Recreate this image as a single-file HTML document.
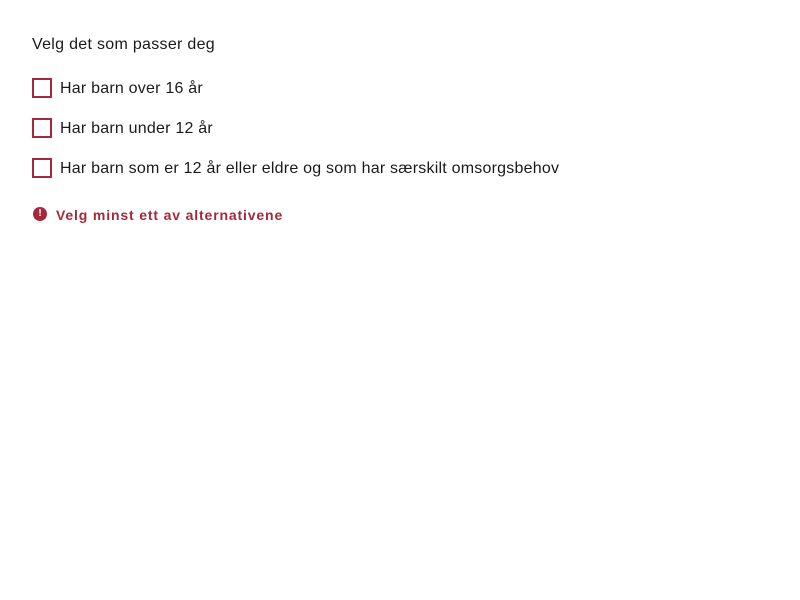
<!DOCTYPE html>
<html><head><meta charset="utf-8"><style>
body{margin:0;width:800px;height:600px;background:#fff;font-family:"Liberation Sans",sans-serif;color:#1a1a1a;}
.legend{position:absolute;left:32px;top:35px;font-size:16px;line-height:20px;letter-spacing:0.3px;}
.row{position:absolute;left:32px;height:20px;}
.box{position:absolute;left:0;top:0;width:16px;height:16px;border:2px solid #a3293a;}
.lbl{position:absolute;left:28px;top:1px;font-size:16px;line-height:20px;white-space:nowrap;letter-spacing:0.22px;}
.err{position:absolute;left:32px;top:206px;height:18px;color:#a3293a;font-weight:bold;font-size:14px;line-height:18px;white-space:nowrap;}
.err .ic{position:absolute;left:1px;top:1px;width:14px;height:14px;border-radius:50%;background:#a3293a;color:#fff;font-size:10px;line-height:14px;text-align:center;}
.err .t{position:absolute;left:24px;top:0;letter-spacing:0.85px;}
</style></head><body>
<div class="legend">Velg det som passer deg</div>
<div class="row" style="top:78px"><div class="box"></div><div class="lbl">Har barn over 16 år</div></div>
<div class="row" style="top:118px"><div class="box"></div><div class="lbl">Har barn under 12 år</div></div>
<div class="row" style="top:158px"><div class="box"></div><div class="lbl">Har barn som er 12 år eller eldre og som har særskilt omsorgsbehov</div></div>
<div class="err"><div class="ic">!</div><div class="t">Velg minst ett av alternativene</div></div>
</body></html>
